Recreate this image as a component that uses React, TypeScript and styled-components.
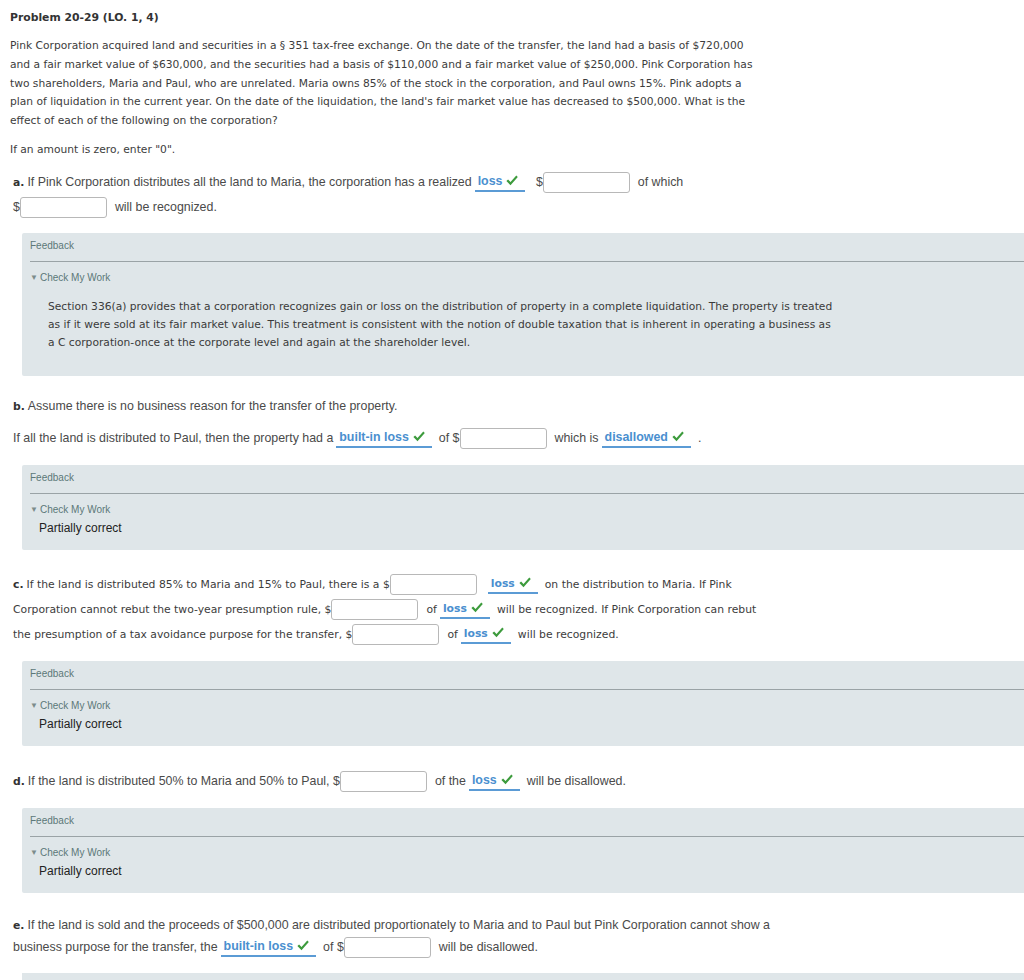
import React from 'react';
import styled, { createGlobalStyle } from 'styled-components';

const Global = createGlobalStyle`
  html, body { margin: 0; padding: 0; background: #fff; }
  body { overflow-x: hidden; }
`;

const MAIN = `"DejaVu Sans", Verdana, sans-serif`;
const NARROW = `"Liberation Sans Narrow", "Liberation Sans", Arial, sans-serif`;
const ARIAL = `"Liberation Sans", Arial, sans-serif`;

const Page = styled.div`
  padding: 10px 0 0 10px;
  font-family: ${MAIN};
  font-size: 10.7px;
  color: #3c3c3c;
`;

const Title = styled.div`
  font-weight: bold;
  font-size: 10.8px;
  line-height: 16px;
  color: #333;
`;

const Para = styled.div<{ $mt: number }>`
  margin-top: ${(p) => p.$mt}px;
  line-height: 18.75px;
  white-space: nowrap;
`;

const Question = styled.div<{ $mt: number; $narrow?: boolean }>`
  margin-top: ${(p) => p.$mt}px;
  padding-left: 3px;
  font-family: ${(p) => (p.$narrow ? NARROW : MAIN)};
  font-size: ${(p) => (p.$narrow ? '12.4px' : '10.8px')};
  color: ${(p) => (p.$narrow ? '#4a4a4a' : '#3c3c3c')};
`;

const Line = styled.div<{ $lh?: number; $mt?: number }>`
  height: ${(p) => p.$lh ?? 25}px;
  line-height: ${(p) => p.$lh ?? 25}px;
  margin-top: ${(p) => p.$mt ?? 0}px;
  white-space: nowrap;
`;

const Letter = styled.b`
  font-family: ${MAIN};
  font-size: 10.8px;
  color: #333;
  margin-right: 3px;
`;

const Amount = styled.input.attrs({ type: 'text' })`
  box-sizing: border-box;
  width: 87px;
  height: 21px;
  border: 1px solid #b8b8b8;
  border-radius: 3px;
  background: #fff;
  vertical-align: middle;
  margin: 0 8px 0 0;
  padding: 0 3px;
`;

const Answer = styled.span`
  display: inline-block;
  line-height: 17px;
  padding: 0 7px 0 3px;
  margin: 0 7px 0 3px;
  border-bottom: 2px solid #5b9bd5;
  color: #4a8fcf;
  font-weight: bold;
  vertical-align: middle;
`;

const Tick = styled.svg`
  width: 12px;
  height: 11px;
  margin-left: 4px;
  vertical-align: -1px;
`;

const Box = styled.div<{ $mt: number }>`
  margin: ${(p) => p.$mt}px 0 0 12px;
  background: #dfe6e9;
  border-radius: 2px 0 0 2px;
  padding: 7px 0 0 8px;
  font-family: ${ARIAL};
`;

const BoxHead = styled.div`
  font-size: 10px;
  line-height: 12px;
  color: #5c7878;
  padding-bottom: 9px;
  border-bottom: 1px solid #9aa3a6;
`;

const CheckWork = styled.div`
  margin-top: 10px;
  font-size: 10px;
  line-height: 12px;
  color: #5c7878;
  display: flex;
  align-items: center;
  gap: 2px;
`;

const Caret = styled.span`
  font-size: 8px;
  color: #7d8c8c;
`;

const Explain = styled.div`
  margin-top: 14px;
  padding: 0 0 24px 18px;
  font-family: ${MAIN};
  font-size: 10.7px;
  line-height: 18px;
  color: #3a3a3a;
  white-space: nowrap;
`;

const Partial = styled.div`
  margin-top: 4px;
  padding: 0 0 14px 9px;
  font-size: 12px;
  line-height: 16px;
  color: #222;
`;

const TailBox = styled.div`
  margin: 14px 0 0 12px;
  height: 12px;
  background: #dfe6e9;
`;

const Check = () => (
  <Tick viewBox="0 0 12 11">
    <path d="M0.4 6.1 L2.1 4.5 L4.5 6.9 L10.3 0.6 L11.8 2.1 L4.5 10.2 Z" fill="#3d9b3d" />
  </Tick>
);

const Ans = ({ children }: { children: React.ReactNode }) => (
  <Answer>
    {children}
    <Check />
  </Answer>
);

const Feedback = ({ children }: { children?: React.ReactNode }) => (
  <>
    <BoxHead>Feedback</BoxHead>
    <CheckWork>
      <Caret>▼</Caret>Check My Work
    </CheckWork>
    {children}
  </>
);

export default function App() {
  return (
    <>
      <Global />
      <Page>
        <Title>Problem 20-29 (LO. 1, 4)</Title>
        <Para $mt={11}>
          Pink Corporation acquired land and securities in a § 351 tax-free exchange. On the date of the transfer, the land had a basis of $720,000
          <br />
          and a fair market value of $630,000, and the securities had a basis of $110,000 and a fair market value of $250,000. Pink Corporation has
          <br />
          two shareholders, Maria and Paul, who are unrelated. Maria owns 85% of the stock in the corporation, and Paul owns 15%. Pink adopts a
          <br />
          plan of liquidation in the current year. On the date of the liquidation, the land's fair market value has decreased to $500,000. What is the
          <br />
          effect of each of the following on the corporation?
        </Para>
        <Para $mt={10}>If an amount is zero, enter "0".</Para>

        <Question $mt={10} $narrow>
          <Line>
            <Letter>a.</Letter>If Pink Corporation distributes all the land to Maria, the corporation has a realized
            <Ans>loss</Ans> $<Amount />
            of which
          </Line>
          <Line>
            $<Amount />
            will be recognized.
          </Line>
        </Question>
        <Box $mt={13.5}>
          <Feedback>
            <Explain>
              Section 336(a) provides that a corporation recognizes gain or loss on the distribution of property in a complete liquidation. The property is treated
              <br />
              as if it were sold at its fair market value. This treatment is consistent with the notion of double taxation that is inherent in operating a business as
              <br />
              a C corporation-once at the corporate level and again at the shareholder level.
            </Explain>
          </Feedback>
        </Box>

        <Question $mt={19} $narrow>
          <Line $lh={22}>
            <Letter>b.</Letter>Assume there is no business reason for the transfer of the property.
          </Line>
          <Line $mt={8.5}>
            If all the land is distributed to Paul, then the property had a<Ans>built-in loss</Ans>
            of $<Amount />
            which is<Ans>disallowed</Ans>.
          </Line>
        </Question>
        <Box $mt={14.5}>
          <Feedback>
            <Partial>Partially correct</Partial>
          </Feedback>
        </Box>

        <Question $mt={21.5}>
          <Line>
            <Letter>c.</Letter>If the land is distributed 85% to Maria and 15% to Paul, there is a $<Amount />
            <Ans>loss</Ans>
            on the distribution to Maria. If Pink
          </Line>
          <Line>
            Corporation cannot rebut the two-year presumption rule, $<Amount />
            of<Ans>loss</Ans>
            will be recognized. If Pink Corporation can rebut
          </Line>
          <Line>
            the presumption of a tax avoidance purpose for the transfer, $<Amount />
            of<Ans>loss</Ans>
            will be recognized.
          </Line>
        </Question>
        <Box $mt={14.5}>
          <Feedback>
            <Partial>Partially correct</Partial>
          </Feedback>
        </Box>

        <Question $mt={22.5} $narrow>
          <Line>
            <Letter>d.</Letter>If the land is distributed 50% to Maria and 50% to Paul, $<Amount />
            of the<Ans>loss</Ans>
            will be disallowed.
          </Line>
        </Question>
        <Box $mt={14.5}>
          <Feedback>
            <Partial>Partially correct</Partial>
          </Feedback>
        </Box>

        <Question $mt={22} $narrow>
          <Line $lh={20}>
            <Letter>e.</Letter>If the land is sold and the proceeds of $500,000 are distributed proportionately to Maria and to Paul but Pink Corporation cannot show a
          </Line>
          <Line $lh={24}>
            business purpose for the transfer, the<Ans>built-in loss</Ans>
            of $<Amount />
            will be disallowed.
          </Line>
        </Question>
        <TailBox />
      </Page>
    </>
  );
}
